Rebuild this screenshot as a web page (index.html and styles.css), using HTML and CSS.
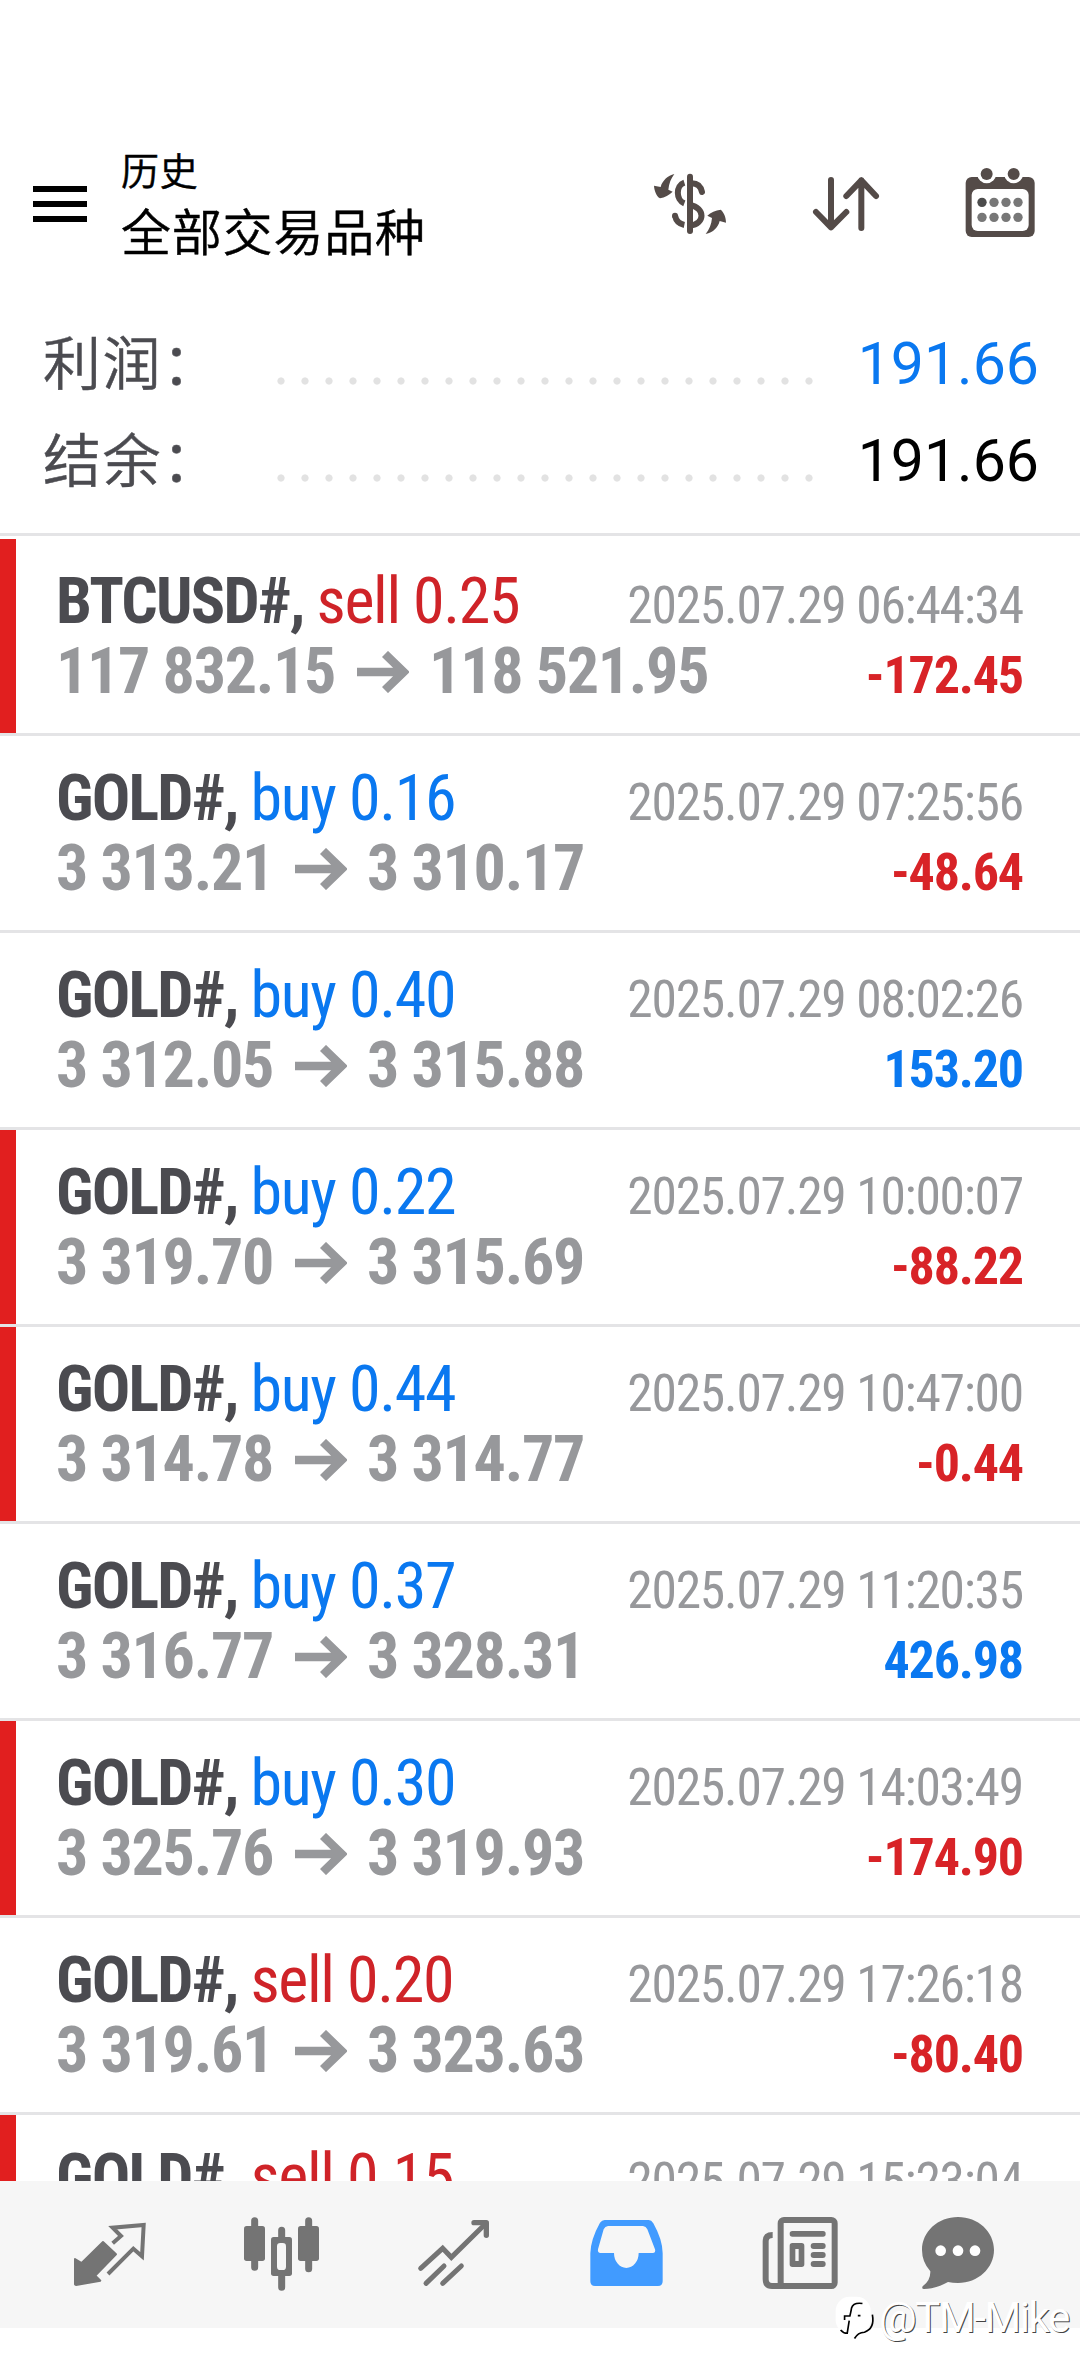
FILE: index.html
```html
<!DOCTYPE html>
<html lang="zh-CN">
<head>
<meta charset="utf-8">
<title>历史</title>
<link rel="stylesheet" href="styles.css">
</head>
<body>
<header class="header">
  <div class="menu"><i></i><i></i><i></i></div>
  <div class="titles"><div class="title-small">历史</div><div class="title-main">全部交易品种</div></div>
  <svg class="tool tool-currency" viewBox="126 0 288 420">
    <g fill="none" stroke="#544b48" stroke-width="18" stroke-linecap="round">
      <path d="M270 140V303"/>
      <path stroke-linecap="butt" d="M253 158C227 166 227 210 253 220"/>
      <path d="M270 160C290 158 302 168 306 186M270 226C316 232 316 282 270 287"/>
      <path d="M225 257C228 272 238 282 253 285" stroke-linecap="butt"/>
    </g>
    <circle cx="225" cy="257" r="9" fill="#544b48"/>
    <path fill="#544b48" d="M223 132C204 137 187 151 182 171L162 167C163 182 169 198 180 205C194 202 208 195 218 185L205 179C207 160 213 145 223 132ZM317 312C340 307 354 293 359 273L378 278C378 262 372 247 362 239C347 241 332 247 322 257L336 264C334 284 328 299 317 312Z"/>
  </svg>
  <svg class="tool tool-sort" viewBox="594 0 288 420">
    <path fill="none" stroke="#544b48" stroke-width="18" stroke-linecap="round" stroke-linejoin="round" d="M693 150V292M648 246L693 292L739 246M784 294V151M739 198L784 151L828 198"/>
  </svg>
  <svg class="tool tool-calendar" viewBox="1057 0 288 420">
    <rect x="1098" y="141" width="207" height="180" rx="18" fill="#544b48"/>
    <circle cx="1161" cy="132" r="28" fill="#fff"/><circle cx="1242" cy="132" r="28" fill="#fff"/>
    <circle cx="1161" cy="132" r="18" fill="#544b48"/><circle cx="1242" cy="132" r="18" fill="#544b48"/>
    <rect x="1116" y="177" width="171" height="126" rx="18" fill="#fff"/>
    <g fill="#777"><circle cx="1147" cy="217" r="14" fill="#4c4c4c"/><circle cx="1183" cy="217" r="14"/><circle cx="1219" cy="217" r="14"/><circle cx="1255" cy="217" r="14"/><circle cx="1147" cy="262" r="14"/><circle cx="1183" cy="262" r="14"/><circle cx="1219" cy="262" r="14"/><circle cx="1255" cy="262" r="14"/></g>
  </svg>
</header>
<section class="summary">
  <div class="sum-row"><span class="sum-label">利润：</span><i class="dots"></i><span class="sum-value gain">191.66</span></div>
  <div class="sum-row"><span class="sum-label">结余：</span><i class="dots"></i><span class="sum-value">191.66</span></div>
</section>
<main class="deals" id="deals"></main>
<nav class="tabs">
  <svg viewBox="6 0 288 360">
    <path fill="#747474" stroke="#747474" stroke-width="6" stroke-linejoin="round" d="M129 156L168 193L106 257L121 272L48 285L45 283V207L65 219Z"/>
    <path fill="none" stroke="#747474" stroke-width="12" stroke-linejoin="miter" d="M158 160L183 138L158 113L251 105L246 199L220 176L144 252"/>
  </svg>
  <svg viewBox="522 0 288 360">
    <g stroke="#747474" stroke-width="21" stroke-linecap="round"><path d="M584 92V232M746 92V236M665 121V150M665 250V292"/></g>
    <g fill="#747474"><rect x="552" y="108" width="63" height="105" rx="8"/><rect x="714" y="108" width="63" height="105" rx="8"/><rect x="633" y="141" width="63" height="117" rx="8"/></g>
    <rect x="651" y="159" width="27" height="81" rx="10" fill="#f6f6f6"/>
  </svg>
  <svg viewBox="1038 0 288 360">
    <g fill="none" stroke="#747474"><path stroke-width="15" stroke-linecap="round" d="M1082 235L1148 175L1174 202L1272 106M1098 280L1152 228" stroke-linejoin="miter"/><path stroke-width="15" stroke-linecap="round" d="M1148 280L1204 228"/><path stroke-width="16" stroke-linecap="round" stroke-linejoin="round" d="M1242 98H1279V136"/></g>
  </svg>
  <svg viewBox="24 0 288 360">
    <path fill="#419bff" fill-rule="evenodd" d="M104 90H236Q244 90 250 100Q278 150 278 190V274Q278 288 264 288H75Q61 288 61 274V190Q62 148 90 98Q96 90 104 90ZM114 108Q105 109 101 118L84 178Q82 189 92 189H132A37 45 0 0 0 206 189H248Q258 189 255 178L232 118Q228 109 219 108Z"/>
  </svg>
  <svg viewBox="540 0 288 360">
    <g fill="none" stroke="#747474" stroke-width="18"><rect x="632" y="90" width="162" height="198" rx="10"/><path d="M608 135Q587 135 587 153V268Q587 288 606 288H640"/></g>
    <g fill="#747474"><rect x="659" y="123" width="108" height="17" rx="8"/><rect x="722" y="159" width="45" height="18" rx="9"/><rect x="722" y="186" width="45" height="18" rx="9"/><rect x="722" y="213" width="45" height="18" rx="9"/><path fill-rule="evenodd" d="M667 159H695Q703 159 703 167V223Q703 231 695 231H667Q659 231 659 223V167Q659 159 667 159ZM676 177V213H686V177Z"/></g>
  </svg>
  <svg viewBox="1056 0 288 360">
    <path fill="#747474" d="M1164 81C1224 81 1272 125 1272 180C1272 234 1224 279 1164 279Q1148 279 1134 276C1108 290 1085 297 1062 297Q1054 296 1058 289Q1082 272 1081 244Q1056 216 1056 180C1056 125 1104 81 1164 81Z"/>
    <g fill="#fff"><circle cx="1112" cy="182" r="16"/><circle cx="1164" cy="182" r="16"/><circle cx="1215" cy="182" r="16"/></g>
  </svg>
</nav>
<div class="watermark">
  <svg viewBox="0 0 130 150"><rect x="5" y="8" width="106" height="112" rx="42" fill="#fff"/><g fill="none" stroke="#000" stroke-width="5"><path d="M86 28Q58 24 53 42Q51 54 48 66H32V78M72 65H80M46 80L40 118Q28 118 20 108M116 62Q124 104 92 115Q72 116 62 134"/></g></svg>
  <span>@TM-Mike</span>
</div>
<script src="deals.js"></script>
</body>
</html>
```
FILE: styles.css
```css
* { box-sizing: border-box; }
body { margin: 0; width: 1080px; height: 2376px; overflow: hidden; position: relative; display: flex; flex-direction: column; background: #fff; font-family: Roboto, "Noto Sans CJK SC", sans-serif; }
svg { display: block; flex: none; }

.header { display: flex; height: 190px; margin-top: 130px; padding-left: 33px; flex: none; }
.menu { width: 54px; padding-top: 56px; display: flex; flex-direction: column; gap: 9px; }
.menu i { height: 6px; background: #000; flex: none; }
.titles { width: 521px; padding: 16px 0 0 34px; font-family: "Noto Sans CJK SC", sans-serif; font-weight: 350; color: #000; -webkit-text-stroke: .5px currentColor; }
.title-small { font-size: 38px; letter-spacing: .7px; line-height: 46px; }
.title-main { font-size: 50px; letter-spacing: .8px; line-height: 58px; margin-top: 8px; }
.tool { width: 96px; height: 140px; }
.tool-currency { margin-left: 34px; }
.tool-sort { margin-left: 60px; }
.tool-calendar { margin-left: 58px; }

.summary { flex: none; height: 216px; border-bottom: 3px solid #e4e4e6; padding: 0 41px 0 43px; }
.sum-row { display: flex; height: 97px; align-items: flex-start; }
.sum-label { width: 226px; font: 350 58px/80px "Noto Sans CJK SC", sans-serif; letter-spacing: 1.5px; color: #4b4b50; -webkit-text-stroke: .5px currentColor; }
.dots { width: 552px; height: 24px; margin-top: 49px; background: radial-gradient(circle at 12px 12px, #e2e2e2 3.2px, transparent 4px) 0 0 / 24px 24px repeat-x; }
.sum-value { flex: 1; text-align: right; font-size: 59px; line-height: 80px; margin-top: 4px; color: #000; }
.sum-value.gain { color: #0a78f0; }

.deals { flex: none; height: 1645px; overflow: hidden; padding-top: 3px; }
.deal { height: 197px; border-bottom: 3px solid #e4e4e6; padding: 28px 57px 0 56px; font-family: "Roboto Condensed", Roboto, sans-serif; }
.deal.stopped { background: linear-gradient(#e11f1f, #e11f1f) 0 0 / 16px 100% no-repeat padding-box; }
.line { display: flex; align-items: baseline; justify-content: space-between; height: 70px; line-height: 70px; font-size: 64px; white-space: pre; }
.symbol { font-weight: 700; color: #4b4b50; letter-spacing: -1.8px; }
.sell, .buy { letter-spacing: -1.35px; }
.sell { color: #cf2328; }
.buy { color: #0a78f0; }
.time { font-size: 51.5px; color: #97989b; letter-spacing: -1.22px; }
.prices { font-weight: 700; color: #97989b; letter-spacing: -1.3px; display: flex; align-items: center; }
.prices svg { width: 52px; height: 42px; margin: 0 20px 0 22px; }
.profit { font-size: 52px; font-weight: 700; letter-spacing: -1.15px; }
.profit.gain { color: #0a78f0; }
.profit.loss { color: #d82327; }

.tabs { flex: none; height: 147px; background: #f6f6f6; padding: 9px 24px 0; display: grid; grid-template-columns: repeat(6, 172px); justify-items: center; }
.tabs svg { width: 96px; height: 120px; }

.watermark { position: absolute; left: 834px; top: 2294px; display: flex; color: #fff; font-size: 42px; letter-spacing: -1.4px; line-height: 48px; text-shadow: 1px 1px 0 #444; }
.watermark svg { width: 43px; height: 50px; margin-right: 2px; }
```
FILE: deals.js
```js
const deals = [
  ['BTCUSD#', 'sell 0.25', '2025.07.29 06:44:34', true, '117 832.15', '118 521.95', '-172.45'],
  ['GOLD#', 'buy 0.16', '2025.07.29 07:25:56', false, '3 313.21', '3 310.17', '-48.64'],
  ['GOLD#', 'buy 0.40', '2025.07.29 08:02:26', false, '3 312.05', '3 315.88', '153.20'],
  ['GOLD#', 'buy 0.22', '2025.07.29 10:00:07', true, '3 319.70', '3 315.69', '-88.22'],
  ['GOLD#', 'buy 0.44', '2025.07.29 10:47:00', true, '3 314.78', '3 314.77', '-0.44'],
  ['GOLD#', 'buy 0.37', '2025.07.29 11:20:35', false, '3 316.77', '3 328.31', '426.98'],
  ['GOLD#', 'buy 0.30', '2025.07.29 14:03:49', true, '3 325.76', '3 319.93', '-174.90'],
  ['GOLD#', 'sell 0.20', '2025.07.29 17:26:18', false, '3 319.61', '3 323.63', '-80.40'],
  ['GOLD#', 'sell 0.15', '2025.07.29 15:23:04', true]
];

const arrow = '<svg viewBox="0 0 52 42"><path d="M0 21H46M28 3L46.5 21L28 39" fill="none" stroke="#97989b" stroke-width="8.6"/></svg>';

const priceLine = (open, close, profit) => `
    <div class="line"><span class="prices"><span>${open}</span>${arrow}<span>${close}</span></span><span class="profit ${profit[0] === '-' ? 'loss' : 'gain'}">${profit}</span></div>`;

document.getElementById('deals').innerHTML = deals.map(([symbol, order, time, stopped, open, close, profit]) => `
  <article class="deal${stopped ? ' stopped' : ''}">
    <div class="line"><span><span class="symbol">${symbol}, </span><span class="${order.split(' ')[0]}">${order}</span></span><span class="time">${time}</span></div>${open ? priceLine(open, close, profit) : ''}
  </article>`).join('');
```
